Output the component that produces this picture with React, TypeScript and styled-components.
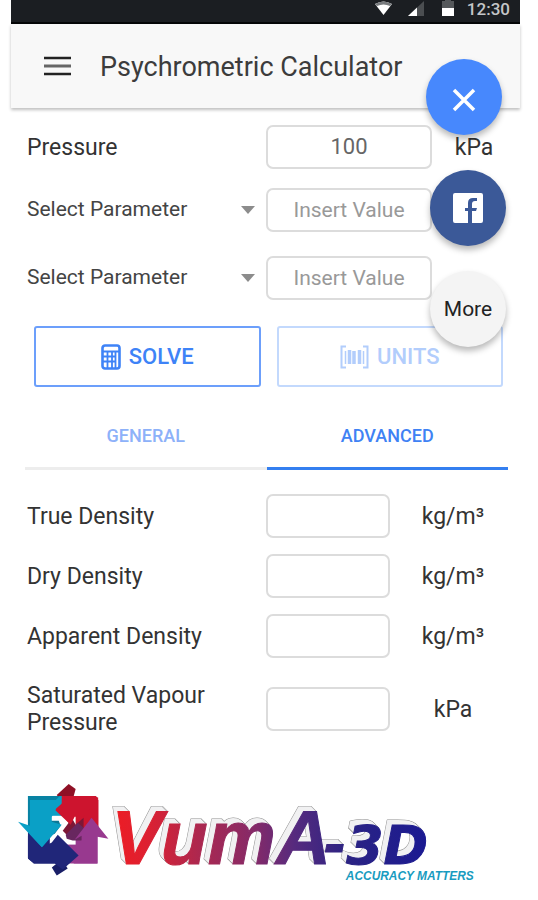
import React, { useState } from "react";
import styled, { createGlobalStyle } from "styled-components";

const GlobalStyle = createGlobalStyle`
  *, *::before, *::after { box-sizing: border-box; }
  body {
    margin: 0;
    background: #fff;
    color: #333;
    font-family: Roboto, "Liberation Sans", sans-serif;
  }
  button, input, select { font: inherit; color: inherit; margin: 0; }
`;

const Screen = styled.div`
  position: relative;
  margin: 0 18px 0 11px;
`;

const StatusBar = styled.div`
  display: flex;
  justify-content: flex-end;
  align-items: flex-start;
  height: 24px;
  padding-right: 10px;
  background: #1b1e22;
  border-bottom: 2px solid #050607;
  color: #c4c6c8;
  font-size: 17px;
  font-weight: 500;
  line-height: 18px;
`;

const StatusIcons = styled.svg`
  width: 82px;
  height: 18px;
  margin-right: 10px;
`;

const Header = styled.header`
  display: flex;
  align-items: center;
  gap: 28px;
  height: 84px;
  padding: 0 0 0 32px;
  background: #f8f8f8;
  box-shadow: 0 2px 3px rgba(0, 0, 0, 0.25);
`;

const MenuButton = styled.button`
  display: flex;
  padding: 0;
  border: 0;
  background: none;
`;

const Title = styled.h1`
  margin: 0;
  padding-top: 2px;
  color: #3c3c3c;
  font-size: 27px;
  font-weight: 400;
  line-height: 32px;
`;

const Form = styled.form`
  padding: 17px 4px 0 16px;
`;

const Row = styled.div<{ $height: number }>`
  display: grid;
  grid-template-columns: 239px 1fr 84px;
  align-items: center;
  height: ${(p) => p.$height}px;
`;

const Label = styled.label`
  font-size: 23px;
  line-height: 27px;
`;

const Field = styled.input`
  width: 100%;
  height: 44px;
  padding: 0 0 2px;
  border: 2px solid #dcdcdc;
  border-radius: 7px;
  background: #fff;
  color: #666;
  font-size: 22px;
  text-align: center;
  &::placeholder { color: #999; opacity: 1; font-size: 21px; }
`;

const Unit = styled.span`
  font-size: 23px;
  line-height: 27px;
  text-align: center;
`;

const SelectWrap = styled.div`
  display: grid;
  grid-template-columns: 1fr 14px;
  align-items: center;
  padding-right: 11px;
  & > * { grid-row: 1; }
  svg { grid-column: 2; pointer-events: none; }
`;

const Select = styled.select`
  grid-column: 1 / 3;
  width: 100%;
  padding: 0 0 2px;
  border: 0;
  appearance: none;
  background: none;
  color: #444;
  font-size: 21px;
  line-height: 27px;
`;

const Actions = styled.div`
  display: grid;
  grid-template-columns: 1fr 1fr;
  gap: 16px;
  padding: 21px 13px 0 7px;
`;

const ActionButton = styled.button<{ $muted?: boolean }>`
  display: flex;
  align-items: center;
  justify-content: center;
  gap: 8px;
  height: 61px;
  padding: 0;
  border: 2px solid ${(p) => (p.$muted ? "#c3d9fd" : "#6c9ffb")};
  border-radius: 3px;
  background: #fff;
  color: ${(p) => (p.$muted ? "#b2cdfc" : "#3e83f7")};
  font-size: 22px;
  font-weight: 500;
`;

const Tabs = styled.div`
  display: grid;
  grid-template-columns: 1fr 1fr;
  margin: 13px 12px 0 14px;
`;

const Tab = styled.button<{ $active: boolean }>`
  height: 70px;
  padding: 3px 0 0;
  border: 0;
  border-bottom: 3px solid ${(p) => (p.$active ? "#347ff0" : "#ededed")};
  background: none;
  color: ${(p) => (p.$active ? "#3f82f4" : "#8db1f9")};
  font-size: 18px;
  font-weight: 500;
`;

const Results = styled.section`
  display: flex;
  flex-direction: column;
  gap: 16px;
  padding: 24px 4px 0 16px;
`;

const ResultRow = styled.div`
  display: grid;
  grid-template-columns: 239px 1fr 126px;
  align-items: center;
`;

const LongResultRow = styled(ResultRow)`
  padding-top: 8px;
`;

const Footer = styled.footer`
  padding: 48px 45px 0 7px;
`;

const Logo = styled.svg`
  display: block;
  width: 100%;
  max-width: 460px;
`;

const FabGroup = styled.div`
  position: absolute;
  top: 59px;
  right: 14px;
`;

const FabList = styled.div`
  display: flex;
  flex-direction: column;
  gap: 25px;
  padding: 35px 0 0 4px;
`;

const Fab = styled.button<{ $tone: string }>`
  display: flex;
  align-items: center;
  justify-content: center;
  width: 76px;
  height: 76px;
  padding: 0;
  border: 0;
  border-radius: 50%;
  background: ${(p) => p.$tone};
  color: #222;
  font-size: 21px;
  box-shadow: 0 4px 6px rgba(0, 0, 0, 0.28);
`;

const CloseFab = styled(Fab)`
  padding-top: 6px;
`;

const ADVANCED = [
  { id: "true", name: "True Density", unit: "kg/m³" },
  { id: "dry", name: "Dry Density", unit: "kg/m³" },
  { id: "apparent", name: "Apparent Density", unit: "kg/m³" },
];

function CalculatorIcon() {
  return (
    <svg width="20" height="26" viewBox="0 0 20 26" fill="none" aria-hidden="true">
      <rect x="1.5" y="1.5" width="17" height="23" rx="2.5" stroke="#3e83f7" strokeWidth="2.6" />
      <path d="M2 7.5h16M6.500 8v16M11 8v16M14.500 8v16M2 12.500h12.500M2 17.500h12.500" stroke="#3e83f7" strokeWidth="1.8" />
    </svg>
  );
}

function UnitsIcon() {
  return (
    <svg width="29" height="24" viewBox="0 0 29 24" fill="none" stroke="#b2cdfc" aria-hidden="true">
      <path d="M6 1.5H1.5v21H6M23 1.5h4.500v21H23" strokeWidth="2" />
      <path d="M5.500 6v13M23.500 6v13" strokeWidth="1.500" />
      <path d="M9.500 5v14M14 6v13M19.500 5v14" strokeWidth="3.500" />
    </svg>
  );
}

function ParameterRow({ index, height }: { index: number; height: number }) {
  return (
    <Row $height={height}>
      <SelectWrap>
        <Select aria-label={`Parameter ${index}`}>
          <option>Select Parameter</option>
        </Select>
        <svg width="14" height="8" viewBox="0 0 14 8" aria-hidden="true">
          <path d="M0 0h14L7 8z" fill="#8c8c8c" />
        </svg>
      </SelectWrap>
      <Field aria-label={`Value ${index}`} placeholder="Insert Value" />
    </Row>
  );
}

const DEPTH = [5, 4, 3, 2, 1];

function VumaLogo() {
  return (
    <Logo viewBox="0 0 460 104" role="img" aria-label="VumA-3D Accuracy Matters">
      <defs>
        <linearGradient id="ink" gradientUnits="userSpaceOnUse" x1="96" y1="0" x2="410" y2="0">
          <stop offset="0" stopColor="#ed1c24" />
          <stop offset="0.1" stopColor="#df2030" />
          <stop offset="0.28" stopColor="#ab2850" />
          <stop offset="0.45" stopColor="#852a68" />
          <stop offset="0.58" stopColor="#562a7e" />
          <stop offset="0.75" stopColor="#2b2383" />
          <stop offset="1" stopColor="#1b1a92" />
        </linearGradient>
        <text
          id="wordmark"
          x="94"
          y="81"
          fontFamily="Liberation Sans, Arial, sans-serif"
          fontWeight="700"
          fontStyle="italic"
          fontSize="77"
        >
          VumA<tspan x="308" fontFamily="DejaVu Sans, sans-serif" fontSize="54">-3D</tspan>
        </text>
      </defs>

      <path d="M39 11L51 0L58 5L55 16L45 19z" fill="#8f1025" />
      <path d="M34 84L39 92L50 85L44 76z" fill="#191e67" />
      <path d="M10 12H46V46H10z" fill="#0aa0c6" />
      <path d="M10 12H42L38 16H14V44H10z" fill="#0882a3" />
      <path d="M44 12H78L81 16V52H44z" fill="#cd142e" />
      <path d="M10 46H48V80H16L10 75z" fill="#202679" />
      <path d="M46 48H80V80H46z" fill="#98398f" />
      <path d="M32 32H58V61H32z" fill="#fff" />
      <path d="M45 32H53L58 41L66 34V48L50 52L45 47L51 39z" fill="#7d1736" />
      <path d="M32 37H41L43 42L37 50L32 52z" fill="#0b7896" />
      <path d="M48 51L60 39L66 44V57H55L49 55z" fill="#68275f" />
      <path d="M37 26L53 41L57 33H66L81 14L78 12H47V17z" fill="#cd142e" />
      <path d="M0 38L12 42V16H38V26L34 33V38L44 41L24 64z" fill="#0aa0c6" />
      <path d="M57 56L74 34L91 55L80 53V80H56L60 72L58 62L64 57V52z" fill="#98398f" />
      <path d="M10 52L24 64L34 59L40 51L61 72L45 86L37 80H16L10 75z" fill="#202679" />

      <g fill="#929292" stroke="#929292" strokeLinejoin="round">
        {DEPTH.map((d) => <use key={d} href="#wordmark" x={-d} y={-d} />)}
      </g>
      <g fill="#f1f1f2">
        {DEPTH.map((d) => <use key={d} href="#wordmark" x={-d} y={-d} />)}
      </g>
      <use href="#wordmark" fill="url(#ink)" stroke="url(#ink)" />
      <text
        x="330"
        y="97"
        fill="#189bc0"
        fontFamily="Liberation Sans, Arial, sans-serif"
        fontWeight="700"
        fontStyle="italic"
        fontSize="12"
      >
        ACCURACY MATTERS
      </text>
    </Logo>
  );
}

export default function App() {
  const [tab, setTab] = useState("advanced");
  const [pressure, setPressure] = useState("100");

  return (
    <>
      <GlobalStyle />
      <Screen>
        <StatusBar>
          <StatusIcons viewBox="0 0 82 18" aria-hidden="true">
            <path d="M0 4q8.500-5 17 0L8.500 15z" fill="#fff" />
            <path d="M0 4q8.500-5 17 0l-2 2q-6.500-3-13 0z" fill="#777a7d" />
            <path d="M49 1v15H33z" fill="#4b4e51" />
            <path d="M42 7.500V16h-9z" fill="#fff" />
            <path d="M67 1h3V0h6v1h3v15H67z" fill="#55585b" />
            <path d="M67 8h12v8H67z" fill="#fff" />
          </StatusIcons>
          <span>12:30</span>
        </StatusBar>
        <Header>
          <MenuButton type="button" aria-label="Menu">
            <svg width="29" height="20" viewBox="0 0 29 20" aria-hidden="true">
              <path d="M1 2h27M1 18h27" stroke="#222" strokeWidth="2.500" />
              <path d="M1 10h27" stroke="#666" strokeWidth="3" />
            </svg>
          </MenuButton>
          <Title>Psychrometric Calculator</Title>
        </Header>

        <Form onSubmit={(e) => e.preventDefault()}>
          <Row $height={44}>
            <Label htmlFor="pressure">Pressure</Label>
            <Field id="pressure" value={pressure} onChange={(e) => setPressure(e.target.value)} />
            <Unit>kPa</Unit>
          </Row>
          <ParameterRow index={1} height={82} />
          <ParameterRow index={2} height={54} />
          <Actions>
            <ActionButton type="submit"><CalculatorIcon />SOLVE</ActionButton>
            <ActionButton type="button" $muted><UnitsIcon />UNITS</ActionButton>
          </Actions>
        </Form>

        <Tabs role="tablist">
          <Tab type="button" role="tab" aria-selected={tab === "general"} $active={tab === "general"} onClick={() => setTab("general")}>GENERAL</Tab>
          <Tab type="button" role="tab" aria-selected={tab === "advanced"} $active={tab === "advanced"} onClick={() => setTab("advanced")}>ADVANCED</Tab>
        </Tabs>

        <Results>
          {ADVANCED.map((item) => (
            <ResultRow key={item.id}>
              <Label htmlFor={item.id}>{item.name}</Label>
              <Field id={item.id} />
              <Unit>{item.unit}</Unit>
            </ResultRow>
          ))}
          <LongResultRow>
            <Label htmlFor="vapour">Saturated Vapour Pressure</Label>
            <Field id="vapour" />
            <Unit>kPa</Unit>
          </LongResultRow>
        </Results>

        <Footer><VumaLogo /></Footer>

        <FabGroup>
          <CloseFab type="button" $tone="#4788fd" aria-label="Close">
            <svg width="24" height="24" viewBox="0 0 24 24" aria-hidden="true">
              <path d="M2 2l20 20M22 2L2 22" stroke="#fff" strokeWidth="3.500" />
            </svg>
          </CloseFab>
          <FabList>
            <Fab type="button" $tone="#3b5998" aria-label="Facebook">
              <svg width="30" height="30" viewBox="0 0 30 30" aria-hidden="true">
                <path d="M2 0h26q2 0 2 2v26q0 2-2 2h-9V18h4l1-3h-5v-4q0-3 3-3h2V5h-4q-5 0-5 5v5h-3v3h3v12H2q-2 0-2-2V2q0-2 2-2z" fill="#fff" />
              </svg>
            </Fab>
            <Fab type="button" $tone="#f4f4f4">More</Fab>
          </FabList>
        </FabGroup>
      </Screen>
    </>
  );
}
